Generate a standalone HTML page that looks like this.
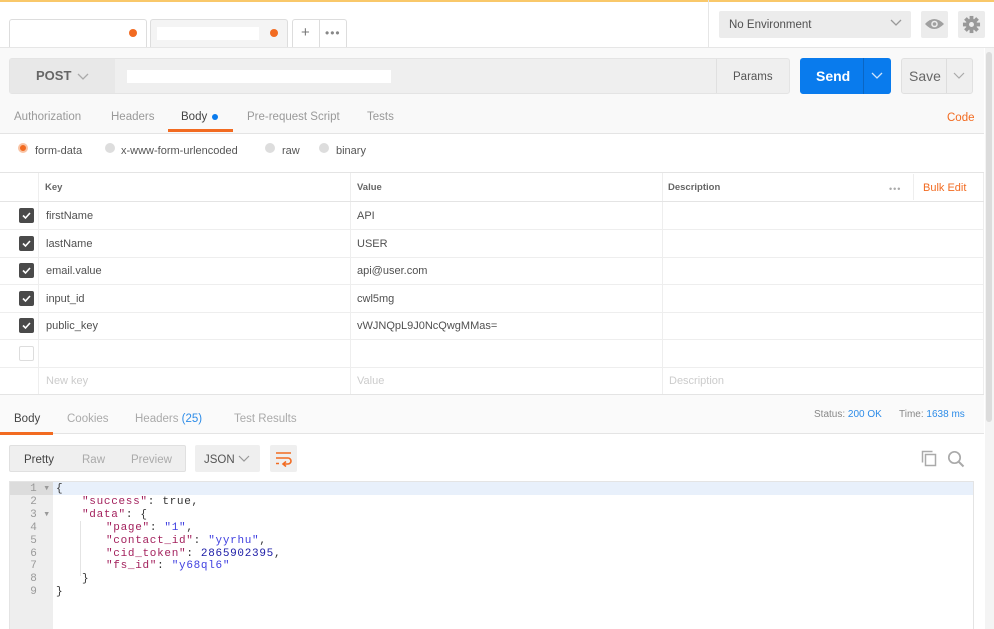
<!DOCTYPE html>
<html><head><style>
*{box-sizing:border-box;margin:0;padding:0}
body{width:994px;height:629px;overflow:hidden;background:#fff;font-family:"Liberation Sans",sans-serif;font-size:11px;line-height:16px;color:#505050;position:relative}
.a{position:absolute}
.dot{width:8px;height:8px;border-radius:50%;background:#f26b21}
.cb{width:15px;height:15px;border-radius:2px;background:#4a4a4a}
.cb svg{display:block}
.code{font-family:"Liberation Mono",monospace;font-size:11px;line-height:12.9px;letter-spacing:0.7px}
.k{color:#a3215d}.s{color:#3f3fe0}.n{color:#1a1aa6}
</style></head><body>
<div class="a" style="left:0;top:0;width:994px;height:2px;background:#f9c86a"></div>
<div class="a" style="left:0;top:47px;width:994px;height:1px;background:#e6e6e6"></div>
<div class="a" style="left:708px;top:0;width:1px;height:47px;background:#e6e6e6"></div>
<div class="a" style="left:9px;top:19px;width:138px;height:28px;border:1px solid #ddd;border-bottom:none;border-radius:3px 3px 0 0;background:#fff"></div>
<div class="a dot" style="left:129px;top:29px"></div>
<div class="a" style="left:150px;top:19px;width:138px;height:28px;border:1px solid #ddd;border-bottom:none;border-radius:3px 3px 0 0;background:#f4f4f4"></div>
<div class="a" style="left:157px;top:27px;width:102px;height:13px;background:#fff"></div>
<div class="a dot" style="left:270px;top:29px"></div>
<div class="a" style="left:292px;top:19px;width:55px;height:28px;border:1px solid #ddd;border-bottom:none;border-radius:3px 3px 0 0;background:#fff"></div>
<div class="a" style="left:319px;top:20px;width:1px;height:27px;background:#ddd"></div>
<div class="a" style="left:301px;top:25px;font-size:15px;color:#777">+</div>
<div class="a" style="left:325px;top:25px;font-size:12px;color:#888;letter-spacing:1px">•••</div>
<div class="a" style="left:719px;top:11px;width:192px;height:27px;background:#ececec;border-radius:2px"></div>
<div class="a" style="left:729px;top:17px;font-size:11.5px;color:#505050">No Environment</div>
<svg class="a" style="left:890px;top:19px" width="12" height="8"><path d="M1 1l5 5 5-5" stroke="#999" fill="none" stroke-width="1.3"/></svg>
<div class="a" style="left:921px;top:11px;width:27px;height:27px;background:#ececec;border-radius:2px"></div>
<svg class="a" style="left:924px;top:17px" width="21" height="14"><path d="M1 7Q10-3 20 7Q10 17 1 7Z" fill="#a0a0a0"/><circle cx="10.5" cy="7" r="3.3" fill="#ececec"/><circle cx="10.5" cy="7" r="1.8" fill="#a0a0a0"/></svg>
<div class="a" style="left:958px;top:11px;width:27px;height:27px;background:#ececec;border-radius:2px"></div>
<svg class="a" style="left:962px;top:15px" width="19" height="19" viewBox="-10 -10 20 20"><g fill="#999"><circle r="6"/><rect x="-2" y="-9" width="4" height="18"/><rect x="-9" y="-2" width="18" height="4"/><rect x="-2" y="-9" width="4" height="18" transform="rotate(45)"/><rect x="-2" y="-9" width="4" height="18" transform="rotate(-45)"/></g><circle r="2.6" fill="#ececec"/></svg>
<div class="a" style="left:0;top:48px;width:984px;height:85px;background:#f9f9f9"></div>
<div class="a" style="left:9px;top:58px;width:781px;height:36px;background:#efefef;border:1px solid #e4e4e4;border-radius:3px"></div>
<div class="a" style="left:10px;top:59px;width:105px;height:34px;background:#e8e8e8"></div>
<div class="a" style="left:36px;top:68px;font-size:13px;color:#666;font-weight:bold">POST</div>
<svg class="a" style="left:77px;top:73px" width="12" height="8"><path d="M1 1l5 5 5-5" stroke="#aaa" fill="none" stroke-width="1.3"/></svg>
<div class="a" style="left:127px;top:70px;width:264px;height:13px;background:#fff"></div>
<div class="a" style="left:716px;top:59px;width:1px;height:34px;background:#e0e0e0"></div>
<div class="a" style="left:733px;top:69px;font-size:11.5px;color:#555">Params</div>
<div class="a" style="left:800px;top:58px;width:91px;height:36px;background:#097bed;border-radius:3px"></div>
<div class="a" style="left:863px;top:58px;width:1px;height:36px;background:#0a66c4"></div>
<div class="a" style="left:816px;top:67px;font-size:14px;color:#fff;font-weight:bold;line-height:18px">Send</div>
<svg class="a" style="left:871px;top:72px" width="12" height="8"><path d="M1 1l5 5 5-5" stroke="#cfe4fb" fill="none" stroke-width="1.3"/></svg>
<div class="a" style="left:901px;top:58px;width:72px;height:36px;background:#efefef;border:1px solid #e0e0e0;border-radius:3px"></div>
<div class="a" style="left:946px;top:59px;width:1px;height:34px;background:#ddd"></div>
<div class="a" style="left:909px;top:67px;font-size:14px;color:#666;line-height:18px">Save</div>
<svg class="a" style="left:953px;top:72px" width="12" height="8"><path d="M1 1l5 5 5-5" stroke="#aaa" fill="none" stroke-width="1.2"/></svg>
<div class="a" style="left:14px;top:109px;color:#999;font-size:11.5px">Authorization</div>
<div class="a" style="left:111px;top:109px;color:#999;font-size:11.5px">Headers</div>
<div class="a" style="left:181px;top:109px;color:#444;font-size:11.5px">Body</div>
<div class="a" style="left:212px;top:114px;width:6px;height:6px;border-radius:50%;background:#097bed"></div>
<div class="a" style="left:168px;top:129px;width:65px;height:3px;background:#f26b21"></div>
<div class="a" style="left:247px;top:109px;color:#999;font-size:11.5px">Pre-request Script</div>
<div class="a" style="left:367px;top:109px;color:#999;font-size:11.5px">Tests</div>
<div class="a" style="left:947px;top:110px;color:#f26b21;font-size:11.5px">Code</div>
<div class="a" style="left:0;top:133px;width:984px;height:1px;background:#e4e4e4"></div>
<div class="a" style="left:18px;top:143px;width:10px;height:10px;border-radius:50%;background:#f26b21;border:2px solid #f9c4a5"></div>
<div class="a" style="left:35px;top:143px;color:#555">form-data</div>
<div class="a" style="left:105px;top:143px;width:10px;height:10px;border-radius:50%;background:#ddd"></div>
<div class="a" style="left:121px;top:143px;color:#555">x-www-form-urlencoded</div>
<div class="a" style="left:265px;top:143px;width:10px;height:10px;border-radius:50%;background:#ddd"></div>
<div class="a" style="left:282px;top:143px;color:#555">raw</div>
<div class="a" style="left:319px;top:143px;width:10px;height:10px;border-radius:50%;background:#ddd"></div>
<div class="a" style="left:336px;top:143px;color:#555">binary</div>
<div class="a" style="left:0;top:172px;width:984px;height:223px;border-top:1px solid #e4e4e4;border-bottom:1px solid #e4e4e4"></div>
<div class="a" style="left:38px;top:173px;width:1px;height:221px;background:#eee"></div>
<div class="a" style="left:350px;top:173px;width:1px;height:221px;background:#eee"></div>
<div class="a" style="left:662px;top:173px;width:1px;height:221px;background:#eee"></div>
<div class="a" style="left:983px;top:173px;width:1px;height:221px;background:#eee"></div>
<div class="a" style="left:45px;top:180px;font-size:9.5px;font-weight:bold;color:#666">Key</div>
<div class="a" style="left:357px;top:180px;font-size:9.5px;font-weight:bold;color:#666">Value</div>
<div class="a" style="left:668px;top:180px;font-size:9.5px;font-weight:bold;color:#666">Description</div>
<div class="a" style="left:889px;top:181px;font-size:9px;color:#aaa;letter-spacing:1px">•••</div>
<div class="a" style="left:913px;top:174px;width:1px;height:26px;background:#eee"></div>
<div class="a" style="left:923px;top:180px;color:#f26b21">Bulk Edit</div>
<div class="a" style="left:0;top:201px;width:984px;height:1px;background:#e4e4e4"></div>
<div class="a" style="left:0;top:229px;width:984px;height:1px;background:#eee"></div>
<div class="a" style="left:0;top:257px;width:984px;height:1px;background:#eee"></div>
<div class="a" style="left:0;top:284px;width:984px;height:1px;background:#eee"></div>
<div class="a" style="left:0;top:312px;width:984px;height:1px;background:#eee"></div>
<div class="a" style="left:0;top:339px;width:984px;height:1px;background:#eee"></div>
<div class="a" style="left:0;top:367px;width:984px;height:1px;background:#eee"></div>
<div class="a cb" style="left:19px;top:208px"><svg width="15" height="15"><path d="M4 7.5l2.5 2.5 4.5-5" stroke="#fff" stroke-width="1.6" fill="none"/></svg></div>
<div class="a cb" style="left:19px;top:236px"><svg width="15" height="15"><path d="M4 7.5l2.5 2.5 4.5-5" stroke="#fff" stroke-width="1.6" fill="none"/></svg></div>
<div class="a cb" style="left:19px;top:263px"><svg width="15" height="15"><path d="M4 7.5l2.5 2.5 4.5-5" stroke="#fff" stroke-width="1.6" fill="none"/></svg></div>
<div class="a cb" style="left:19px;top:291px"><svg width="15" height="15"><path d="M4 7.5l2.5 2.5 4.5-5" stroke="#fff" stroke-width="1.6" fill="none"/></svg></div>
<div class="a cb" style="left:19px;top:318px"><svg width="15" height="15"><path d="M4 7.5l2.5 2.5 4.5-5" stroke="#fff" stroke-width="1.6" fill="none"/></svg></div>
<div class="a" style="left:19px;top:346px;width:15px;height:15px;border:1px solid #ddd;border-radius:2px"></div>
<div class="a" style="left:46px;top:208px">firstName</div><div class="a" style="left:357px;top:208px">API</div>
<div class="a" style="left:46px;top:236px">lastName</div><div class="a" style="left:357px;top:236px">USER</div>
<div class="a" style="left:46px;top:263px">email.value</div><div class="a" style="left:357px;top:263px">api@user.com</div>
<div class="a" style="left:46px;top:291px">input_id</div><div class="a" style="left:357px;top:291px">cwl5mg</div>
<div class="a" style="left:46px;top:318px">public_key</div><div class="a" style="left:357px;top:318px">vWJNQpL9J0NcQwgMMas=</div>
<div class="a" style="left:46px;top:373px;color:#ccc">New key</div><div class="a" style="left:357px;top:373px;color:#ccc">Value</div><div class="a" style="left:669px;top:373px;color:#ccc">Description</div>
<div class="a" style="left:0;top:395px;width:984px;height:39px;background:#fafafa;border-bottom:1px solid #e4e4e4"></div>
<div class="a" style="left:14px;top:411px;color:#444;font-size:11.5px">Body</div>
<div class="a" style="left:0;top:432px;width:53px;height:3px;background:#f26b21"></div>
<div class="a" style="left:67px;top:411px;color:#aaa;font-size:11.5px">Cookies</div>
<div class="a" style="left:135px;top:411px;color:#aaa;font-size:11.5px">Headers <span style="color:#2d8ce8">(25)</span></div>
<div class="a" style="left:234px;top:411px;color:#aaa;font-size:11.5px">Test Results</div>
<div class="a" style="left:814px;top:407px;font-size:10px;color:#888">Status: <span style="color:#2d8ce8">200 OK</span></div>
<div class="a" style="left:899px;top:407px;font-size:10px;color:#888">Time: <span style="color:#2d8ce8">1638 ms</span></div>
<div class="a" style="left:9px;top:445px;width:177px;height:27px;background:#efefef;border:1px solid #e0e0e0;border-radius:2px"></div>
<div class="a" style="left:24px;top:452px;color:#444;font-size:11.5px">Pretty</div>
<div class="a" style="left:82px;top:452px;color:#aaa;font-size:11.5px">Raw</div>
<div class="a" style="left:131px;top:452px;color:#aaa;font-size:11.5px">Preview</div>
<div class="a" style="left:195px;top:445px;width:65px;height:27px;background:#efefef;border-radius:2px"></div>
<div class="a" style="left:204px;top:452px;color:#555;font-size:11.5px">JSON</div>
<svg class="a" style="left:238px;top:455px" width="12" height="8"><path d="M1 1l5 5 5-5" stroke="#999" fill="none" stroke-width="1.2"/></svg>
<div class="a" style="left:270px;top:445px;width:27px;height:27px;background:#efefef;border-radius:2px"></div>
<svg class="a" style="left:275px;top:451px" width="18" height="16"><path d="M1 2h15M1 7h12a3 3 0 0 1 0 6H8M11 10.5l-3 2.5 3 2.5M1 12.5h3" stroke="#f26b21" stroke-width="1.6" fill="none"/></svg>
<svg class="a" style="left:921px;top:450px" width="16" height="17"><path d="M4.5 4.5h10v11h-10z M1.5 12.5v-11h10" stroke="#aaa" stroke-width="1.5" fill="none"/></svg>
<svg class="a" style="left:947px;top:450px" width="18" height="18"><circle cx="7.5" cy="7.5" r="5.7" stroke="#aaa" stroke-width="1.7" fill="none"/><path d="M11.5 11.5l5 5" stroke="#aaa" stroke-width="2"/></svg>
<div class="a" style="left:9px;top:481px;width:965px;height:148px;border:1px solid #e4e4e4;border-bottom:none"></div>
<div class="a" style="left:10px;top:482px;width:43px;height:147px;background:#eeeeee"></div>
<div class="a" style="left:10px;top:482px;width:43px;height:13px;background:#dcdcdc"></div>
<div class="a" style="left:53px;top:482px;width:920px;height:13px;background:#e8f0fb"></div>
<div class="a code" style="left:14px;top:483px;width:36px;text-align:right;color:#999;letter-spacing:0">1 ▾<br>2&nbsp;&nbsp;<br>3 ▾<br>4&nbsp;&nbsp;<br>5&nbsp;&nbsp;<br>6&nbsp;&nbsp;<br>7&nbsp;&nbsp;<br>8&nbsp;&nbsp;<br>9&nbsp;&nbsp;</div>
<div class="a" style="left:80px;top:521px;width:1px;height:55px;background:#e4e4e4"></div>
<div class="a code" style="left:0;top:483px;width:700px;color:#333;white-space:pre"><div style="padding-left:56px">{</div><div style="padding-left:82px"><span class="k">"success"</span>: true,</div><div style="padding-left:82px"><span class="k">"data"</span>: {</div><div style="padding-left:106px"><span class="k">"page"</span>: <span class="s">"1"</span>,</div><div style="padding-left:106px"><span class="k">"contact_id"</span>: <span class="s">"yyrhu"</span>,</div><div style="padding-left:106px"><span class="k">"cid_token"</span>: <span class="n">2865902395</span>,</div><div style="padding-left:106px"><span class="k">"fs_id"</span>: <span class="s">"y68ql6"</span></div><div style="padding-left:82px">}</div><div style="padding-left:56px">}</div></div>
<div class="a" style="left:985px;top:48px;width:9px;height:581px;background:#f4f4f4"></div>
<div class="a" style="left:986px;top:52px;width:6px;height:370px;background:#dcdcdc;border-radius:3px"></div>
</body></html>
